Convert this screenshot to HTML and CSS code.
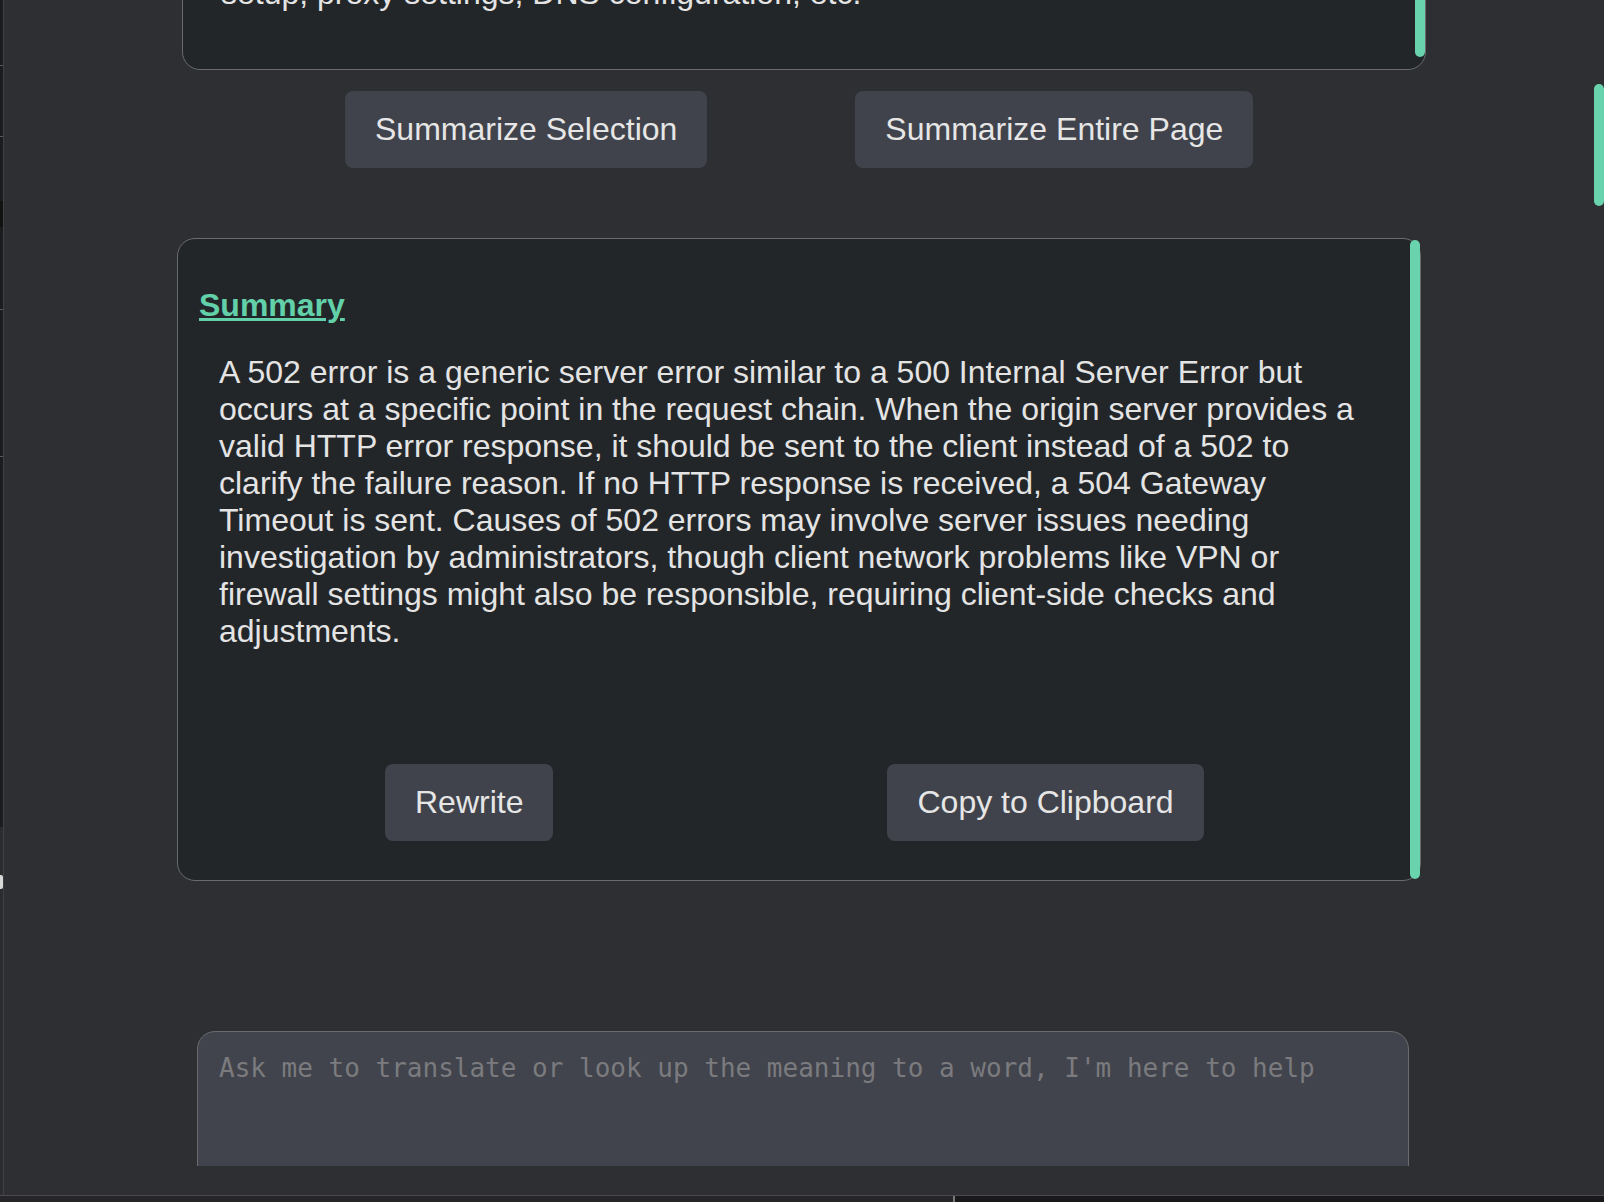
FILE: index.html
```html
<!DOCTYPE html>
<html lang="en">
<head>
<meta charset="utf-8">
<title>Summarizer</title>
<link rel="stylesheet" href="styles.css">
</head>
<body>
<div class="frame">
  <div class="edge">
    <div class="edge-dark">
      <span class="tick t1"></span>
      <span class="tick t2"></span>
      <span class="band"></span>
      <span class="tick t3"></span>
      <span class="tick t4"></span>
    </div>
    <div class="edge-light"><span class="blob"></span></div>
  </div>
  <main class="app">
    <section class="input-box">
      <div class="input-text">setup, proxy settings, DNS configuration, etc.</div>
      <div class="track"><div class="thumb thumb-top"></div></div>
    </section>

    <div class="actions actions-top">
      <button class="btn">Summarize Selection</button>
      <button class="btn">Summarize Entire Page</button>
    </div>

    <section class="summary-box">
      <div class="summary-content">
        <h2 class="summary-title">Summary</h2>
        <p class="summary-text">A 502 error is a generic server error similar to a 500 Internal Server Error but occurs at a specific point in the request chain. When the origin server provides a valid HTTP error response, it should be sent to the client instead of a 502 to clarify the failure reason. If no HTTP response is received, a 504 Gateway Timeout is sent. Causes of 502 errors may involve server issues needing investigation by administrators, though client network problems like VPN or firewall settings might also be responsible, requiring client-side checks and adjustments.</p>
        <div class="actions actions-summary">
          <button class="btn">Rewrite</button>
          <button class="btn">Copy to Clipboard</button>
        </div>
      </div>
      <div class="track"><div class="thumb thumb-full"></div></div>
    </section>

    <div class="prompt-wrap">
      <textarea class="prompt" placeholder="Ask me to translate or look up the meaning to a word, I'm here to help"></textarea>
    </div>
  </main>
</div>
<div class="bottom">
  <div class="bottom-left"></div>
  <div class="bottom-right"></div>
</div>
<div class="page-thumb"></div>
</body>
</html>
```
FILE: styles.css
```css
* { box-sizing: border-box; }

html, body {
  margin: 0;
  padding: 0;
  height: 1202px;
  overflow: hidden;
  background: #2e2f33;
}

body {
  display: flex;
  flex-direction: column;
  font-family: "Liberation Sans", Arial, sans-serif;
  color: #e4e4e4;
}

.frame {
  flex: 1;
  min-height: 0;
  display: flex;
  overflow: hidden;
}

/* left window edge */
.edge {
  width: 4px;
  flex: none;
  display: flex;
  flex-direction: column;
  border-right: 1px solid #3f4044;
}
.edge-dark {
  height: 827px;
  background: #1c1c1e;
  display: flex;
  flex-direction: column;
}
.tick { display: block; height: 1px; background: #5a5a5e; }
.t1 { margin-top: 65px; }
.t2 { margin-top: 70px; }
.band { display: block; height: 26px; margin-top: 64px; background: #111112; }
.t3 { margin-top: 82px; }
.t4 { margin-top: 146px; }
.edge-light {
  flex: 1;
  background: #2b2c30;
  padding-top: 48px;
}
.blob { display: block; width: 3px; height: 14px; background: #d8d8d8; border-radius: 0 2px 2px 0; }

.app {
  flex: 1;
  min-width: 0;
  display: flex;
  flex-direction: column;
  overflow: hidden;
}

/* top (scrolled) input box */
.input-box {
  margin: -47px 0 0 178px;
  width: 1244px;
  display: flex;
  background: #232629;
  border: 1px solid #6b6b6b;
  border-radius: 18px;
  overflow: hidden;
}
.input-text {
  flex: 1;
  font-size: 32px;
  padding: 21px 30px 57px 38px;
  color: #e4e4e4;
}

.track {
  width: 10px;
  flex: none;
  display: flex;
  flex-direction: column;
}
.thumb {
  background: #68d3ad;
  border-radius: 5px;
}
.thumb-top { flex: 1; margin-bottom: 12px; }
.thumb-full { flex: 1; margin: 1px 0; }

/* buttons */
.actions { display: flex; }
.actions-top {
  margin-top: 21px;
  padding-left: 341px;
  gap: 148px;
}
.btn {
  font-family: "Liberation Sans", Arial, sans-serif;
  font-size: 32px;
  line-height: normal;
  color: #e6e6e6;
  background: #40434b;
  border: none;
  border-radius: 8px;
  padding: 20px 30px;
  margin: 0;
}

/* summary card */
.summary-box {
  margin: 70px 0 0 173px;
  width: 1244px;
  display: flex;
  background: #232629;
  border: 1px solid #6b6b6b;
  border-radius: 18px;
}
.summary-content {
  flex: 1;
  padding: 48px 0 39px 21px;
}
.summary-title {
  margin: 0;
  font-size: 32px;
  font-weight: bold;
  line-height: normal;
  color: #62d0a8;
  text-decoration: underline;
}
.summary-text {
  margin: 30px 42px 0 20px;
  font-size: 32px;
  line-height: normal;
  color: #e4e4e4;
}
.actions-summary {
  margin-top: 114px;
  padding-left: 186px;
  gap: 334px;
}

/* prompt */
.prompt-wrap {
  margin: 150px 0 0 193px;
  width: 1212px;
  height: 135px;
  overflow: hidden;
  flex: none;
}
.prompt {
  display: block;
  width: 100%;
  height: 180px;
  resize: none;
  background: #41444c;
  border: 1px solid #6b6b6b;
  border-radius: 18px;
  padding: 21px 21px;
  font-family: "DejaVu Sans Mono", monospace;
  font-size: 26px;
  color: #e4e4e4;
  outline: none;
}
.prompt::placeholder { color: #7b7b7f; }

/* bottom strip of other windows */
.bottom {
  height: 7px;
  flex: none;
  display: flex;
  border-top: 1px solid #4a4a4e;
}
.bottom-left {
  width: 955px;
  background: #262628;
  border-right: 2px solid #7a7a7a;
}
.bottom-right { flex: 1; background: #19191b; }

/* page scrollbar thumb overlay */
.page-thumb {
  position: fixed;
  top: 84px;
  right: 0;
  width: 10px;
  height: 122px;
  border-radius: 5px;
  background: #68d3ad;
}
```
